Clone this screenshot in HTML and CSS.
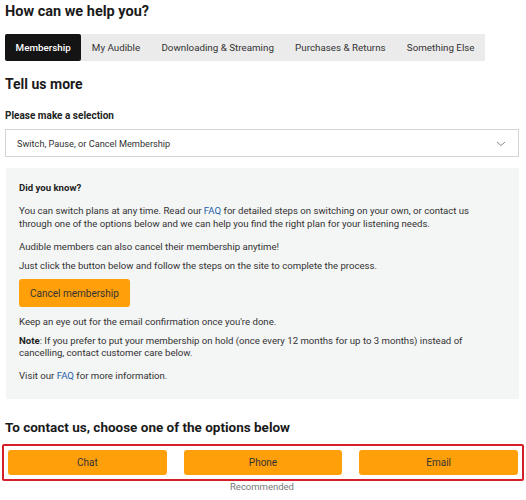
FILE: index.html
```html
<!DOCTYPE html>
<html>
<head>
<meta charset="utf-8">
<link rel="stylesheet" href="styles.css">
</head>
<body>
<div class="page">
  <h1 class="title">How can we help you?</h1>
  <div class="tabs">
    <span class="tab active">Membership</span>
    <span class="tab">My Audible</span>
    <span class="tab">Downloading &amp; Streaming</span>
    <span class="tab">Purchases &amp; Returns</span>
    <span class="tab">Something Else</span>
  </div>
  <h2 class="subtitle">Tell us more</h2>
  <div class="label">Please make a selection</div>
  <div class="select">
    <span>Switch, Pause, or Cancel Membership</span>
    <svg class="chev" width="10" height="6" viewBox="0 0 10 6"><path d="M1 1 L5 4.5 L9 1" fill="none" stroke="#888" stroke-width="1"/></svg>
  </div>
  <div class="panel">
    <div class="panel-title">Did you know?</div>
    <p class="p1">You can switch plans at any time. Read our <a>FAQ</a> for detailed steps on switching on your own, or contact us through one of the options below and we can help you find the right plan for your listening needs.</p>
    <p class="p2">Audible members can also cancel their membership anytime!</p>
    <p>Just click the button below and follow the steps on the site to complete the process.</p>
    <button class="cancel">Cancel membership</button>
    <p class="keep">Keep an eye out for the email confirmation once you're done.</p>
    <p><b>Note</b>: If you prefer to put your membership on hold (once every 12 months for up to 3 months) instead of cancelling, contact customer care below.</p>
    <p class="visit">Visit our <a>FAQ</a> for more information.</p>
  </div>
  <h2 class="contact">To contact us, choose one of the options below</h2>
  <div class="options">
    <div class="opt"><button>Chat</button></div>
    <div class="opt"><button>Phone</button></div>
    <div class="opt"><button>Email</button></div>
  </div>
  <div class="rec">Recommended</div>
</div>
</body>
</html>
```
FILE: styles.css
```css
* { box-sizing: border-box; }
body { margin: 0; background: #fff; font-family: Roboto, "Liberation Sans", sans-serif; color: #222; }
.page { padding: 0 7px 0 5px; }
.title { margin: 0; padding-top: 3px; font-family: Roboto, sans-serif; font-weight: 700; font-size: 14.5px; line-height: 18px; color: #1a1a1a; }
.tabs { display: inline-flex; margin-top: 13px; background: #ebebeb; height: 27px; align-items: stretch; white-space: nowrap; }
.tab { flex-shrink: 0; display: flex; align-items: center; padding: 0 10.6px; font-family: Roboto, sans-serif; font-size: 9.8px; color: #333; }
.tab.active { background: #141414; color: #fff; border-radius: 2px; font-weight: 500; }
.subtitle { margin: 14px 0 0; font-family: Roboto, sans-serif; font-weight: 700; font-size: 14px; line-height: 18px; color: #1a1a1a; }
.label { margin-top: 16px; font-family: Roboto, sans-serif; font-weight: 700; font-size: 10px; line-height: 14px; color: #222; }
.select { margin-top: 6px; height: 28px; border: 1px solid #d4d4d4; display: flex; align-items: center; justify-content: space-between; padding: 0 12px 0 11px; font-size: 9.2px; color: #333; font-family: Roboto, sans-serif; }
.chev { margin-top: 1px; }
.panel { margin-top: 11px; margin-left: 1px; background: #f4f5f5; padding: 12px 45px 10px 13px; font-size: 9.6px; line-height: 12.5px; color: #333; height: 231px; }
.panel-title { font-family: Roboto, sans-serif; font-weight: 700; font-size: 9.6px; line-height: 13px; color: #222; margin-top: 1px; }
.panel p { margin: 6px 0 0; }
.panel p.p1 { margin-top: 11px; }
.panel p.p2 { margin-top: 11px; }
.panel a { color: #1f5fa8; }
.panel b { color: #222; }
.cancel { display: block; margin-top: 7px; background: #ff9f0a; border: none; border-radius: 3px; height: 28px; padding: 0 11px; font-family: Roboto, sans-serif; font-size: 10px; color: #333; }
.panel p.keep { margin-top: 9px; }
.panel p.visit { margin-top: 10px; }
.contact { margin: 19px 0 0; font-family: Roboto, sans-serif; font-weight: 700; font-size: 13.5px; line-height: 18px; color: #1a1a1a; }
.options { margin: 8px -5px 0 -3px; border: 2px solid #d61e2b; border-radius: 2px; height: 37px; display: flex; gap: 17px; padding: 4px; }
.opt { flex: 1; display: flex; }
.opt button { flex: 1; background: #ff9f0a; border: none; border-radius: 3px; font-family: Roboto, sans-serif; font-size: 10px; color: #333; }
.rec { text-align: center; font-size: 9.5px; color: #777; margin-top: 0; font-family: Roboto, sans-serif; }
```
